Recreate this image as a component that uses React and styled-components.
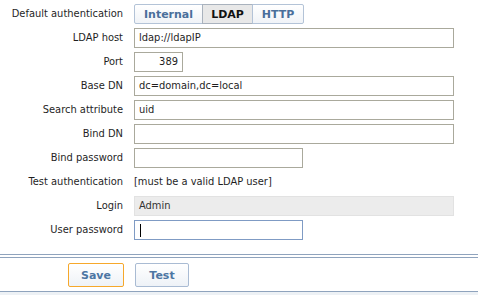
import React from "react";
import styled, { createGlobalStyle } from "styled-components";

const GlobalStyle = createGlobalStyle`
  body {
    margin: 0;
    background: #ffffff;
    font-family: "DejaVu Sans Condensed", "DejaVu Sans", Verdana, sans-serif;
    font-size: 11px;
    color: #1f1f1f;
  }
`;

const Page = styled.div`
  width: 478px;
  height: 295px;
  overflow: hidden;
  background: #ffffff;
`;

const Form = styled.div`
  display: grid;
  grid-template-columns: 123px 1fr;
  column-gap: 11px;
  row-gap: 4px;
  padding-top: 4px;
`;

const Label = styled.div`
  text-align: right;
  height: 20px;
  line-height: 20px;
  white-space: nowrap;
`;

const Field = styled.div`
  display: flex;
  align-items: center;
  height: 20px;
`;

const Segmented = styled.div`
  display: flex;
  height: 20px;
`;

const Segment = styled.button`
  font-family: "DejaVu Sans", Verdana, sans-serif;
  font-size: 11px;
  font-weight: bold;
  height: 20px;
  width: ${(p) => p.$w}px;
  padding: 0;
  margin-left: -1px;
  border: 1px solid ${(p) => (p.$active ? "#a9b2bd" : "#b3c3d7")};
  background: ${(p) =>
    p.$active ? "#e8e8e8" : "linear-gradient(#ffffff, #f0f3f7)"};
  color: ${(p) => (p.$active ? "#111111" : "#4a6f9b")};
  border-radius: ${(p) => p.$radius || "0"};
  &:first-child {
    margin-left: 0;
  }
`;

const Input = styled.div`
  box-sizing: border-box;
  height: 20px;
  width: ${(p) => p.$w}px;
  border: 1px solid ${(p) => (p.$focus ? "#7f9bc4" : p.$disabled ? "#e2e2e2" : "#aaa99c")};
  background: ${(p) => (p.$disabled ? "#ececec" : "#ffffff")};
  padding: 0 4px;
  line-height: 18px;
  text-align: ${(p) => (p.$right ? "right" : "left")};
  color: ${(p) => (p.$disabled ? "#333333" : "#1f1f1f")};
  white-space: nowrap;
`;

const Caret = styled.span`
  display: inline-block;
  width: 1px;
  height: 13px;
  background: #000;
  vertical-align: middle;
  margin-left: 1px;
`;

const Note = styled.div`
  height: 20px;
  line-height: 20px;
`;

const Footer = styled.div`
  margin-top: 14px;
  border-top: 1px solid #8fa3bd;
`;

const ButtonBar = styled.div`
  margin-top: 2px;
  border-top: 1px solid #8fa3bd;
  border-bottom: 1px solid #8fa3bd;
  display: flex;
  gap: 11px;
  padding: 5px 0 4px 68px;
`;

const Button = styled.button`
  font-family: "DejaVu Sans", Verdana, sans-serif;
  font-size: 11px;
  font-weight: bold;
  height: 24px;
  width: ${(p) => p.$w}px;
  padding: 0;
  border: 1px solid ${(p) => (p.$primary ? "#f6a82b" : "#a9bbd3")};
  border-radius: 2px;
  background: linear-gradient(#ffffff, #eef2f7);
  color: #4d76a3;
`;

const Bottom = styled.div`
  height: 10px;
  background: #edf1f5;
`;

const rows = [
  { label: "LDAP host", value: "ldap://ldapIP", w: 320 },
  { label: "Port", value: "389", w: 49, right: true },
  { label: "Base DN", value: "dc=domain,dc=local", w: 320 },
  { label: "Search attribute", value: "uid", w: 320 },
  { label: "Bind DN", value: "", w: 320 },
  { label: "Bind password", value: "", w: 169 },
];

export default function App() {
  return (
    <Page>
      <GlobalStyle />
      <Form>
        <Label>Default authentication</Label>
        <Field>
          <Segmented>
            <Segment $w={69} $radius="2px 0 0 2px">Internal</Segment>
            <Segment $w={51} $active>LDAP</Segment>
            <Segment $w={52} $radius="0 2px 2px 0">HTTP</Segment>
          </Segmented>
        </Field>
        {rows.map((r) => (
          <React.Fragment key={r.label}>
            <Label>{r.label}</Label>
            <Field>
              <Input $w={r.w} $right={r.right}>
                {r.value}
              </Input>
            </Field>
          </React.Fragment>
        ))}
        <Label>Test authentication</Label>
        <Note>[must be a valid LDAP user]</Note>
        <Label>Login</Label>
        <Field>
          <Input $w={320} $disabled>
            Admin
          </Input>
        </Field>
        <Label>User password</Label>
        <Field>
          <Input $w={169} $focus>
            <Caret />
          </Input>
        </Field>
      </Form>
      <Footer>
        <ButtonBar>
          <Button $w={56} $primary>
            Save
          </Button>
          <Button $w={54}>Test</Button>
        </ButtonBar>
        <Bottom />
      </Footer>
    </Page>
  );
}
